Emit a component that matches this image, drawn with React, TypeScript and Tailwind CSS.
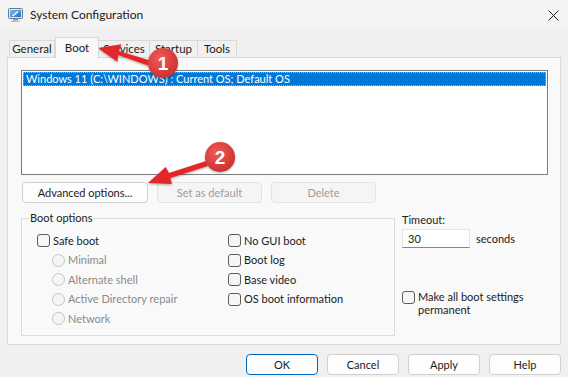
import React from 'react';

const font = "font-['Segoe_UI','Lato',sans-serif]";

function AppIcon() {
  return (
    <svg width="15" height="14" viewBox="0 0 15 14">
      <defs>
        <linearGradient id="scr" x1="0" y1="0" x2="1" y2="1">
          <stop offset="0" stopColor="#7fbef5" />
          <stop offset="1" stopColor="#1f6fc9" />
        </linearGradient>
      </defs>
      <rect x="0.5" y="0.5" width="14" height="10" rx="1" fill="#dfe5ea" stroke="#6d7b88" />
      <rect x="2" y="2" width="11" height="7" fill="url(#scr)" />
      <path d="M4 7.5 L9.5 3 L10.5 4 L5 8.5 Z" fill="#ffffff" />
      <rect x="5" y="11" width="5" height="1.5" fill="#8a96a2" />
      <rect x="3" y="12.5" width="9" height="1.5" rx="0.5" fill="#b7c0c8" />
    </svg>
  );
}

function Checkbox() {
  return <span className="w-[13px] h-[13px] rounded-[3px] border border-[#5d5d5d] bg-[#f6f6f6] shrink-0" />;
}

function Radio() {
  return <span className="w-[13px] h-[13px] rounded-full border border-[#c4c4c4] bg-[#f5f5f5] shrink-0" />;
}

function Btn({ label, w, disabled, primary }: { label: string; w: string; disabled?: boolean; primary?: boolean }) {
  const base = 'h-[21px] rounded-[4px] border flex items-center justify-center';
  const tone = disabled
    ? 'bg-[#f5f5f5] border-[#e3e3e3] text-[#9d9d9d]'
    : primary
      ? 'bg-[#fdfdfd] border-[#0067c0] text-[#1b1b1b]'
      : 'bg-[#fdfdfd] border-[#d0d0d0] text-[#1b1b1b]';
  return <div className={`${base} ${tone} ${w}`}>{label}</div>;
}

export default function App() {
  const tabs = [
    { name: 'General', w: 'w-[46px]' },
    { name: 'Boot', w: 'w-[44px]', active: true },
    { name: 'Services', w: 'w-[51px]' },
    { name: 'Startup', w: 'w-[48px]' },
    { name: 'Tools', w: 'w-[39px]' },
  ];

  return (
    <div className={`relative w-[568px] h-[377px] overflow-hidden bg-[#f0f0f0] text-[#1b1b1b] text-[11px] leading-[14px] flex flex-col ${font}`}>
      {/* title bar */}
      <div className="h-[30px] bg-[#f3f3f3] flex items-center pl-[8px] pr-[9px] shrink-0">
        <AppIcon />
        <span className="ml-[7px] text-[12px]">System Configuration</span>
        <svg className="ml-auto" width="11" height="11" viewBox="0 0 11 11">
          <path d="M0.5 0.5 L10.5 10.5 M10.5 0.5 L0.5 10.5" stroke="#1b1b1b" strokeWidth="1" />
        </svg>
      </div>

      {/* tabs */}
      <div className="flex items-end pl-[9px] pt-[7px] h-[27px] shrink-0 text-[11.5px]">
        {tabs.map((t) =>
          t.active ? (
            <div key={t.name} className={`${t.w} h-[21px] -mb-px relative z-10 bg-[#f9f9f9] border border-b-0 border-[#d9d9d9] flex items-start pt-[3px] justify-center`}>
              {t.name}
            </div>
          ) : (
            <div key={t.name} className={`${t.w} h-[17px] bg-[#f0f0f0] border border-b-0 border-l-0 first:border-l border-[#d9d9d9] flex items-center justify-center`}>
              {t.name}
            </div>
          )
        )}
      </div>

      {/* tab panel */}
      <div className="mx-[7px] w-[554px] h-[288px] border border-[#d9d9d9] bg-[#f9f9f9] pl-[13px] pt-[12px] shrink-0">
        <div className="w-[527px] h-[105px] border border-[#7c7c7c] bg-white p-px">
          <div className="h-[14px] bg-[#0078d7] outline outline-1 outline-dotted outline-[#f2a23a] -outline-offset-1 text-white pl-[3px] flex items-center">
            Windows 11 (C:\WINDOWS) : Current OS; Default OS
          </div>
        </div>

        <div className="flex gap-[9px] mt-[7px] ml-px">
          <Btn label="Advanced options..." w="w-[126px]" />
          <Btn label="Set as default" w="w-[105px]" disabled />
          <Btn label="Delete" w="w-[105px]" disabled />
        </div>

        <div className="flex mt-[8px]">
          <fieldset className="w-[374px] h-[125px] border border-[#dcdcdc] pl-[15px] pt-[6px]">
            <legend className="-ml-[8px] px-[1px] leading-[14px]">Boot options</legend>
            <div className="flex">
              <div className="w-[191px] flex flex-col">
                <div className="h-[19.5px] flex items-center gap-[3px]"><Checkbox />Safe boot</div>
                {['Minimal', 'Alternate shell', 'Active Directory repair', 'Network'].map((r) => (
                  <div key={r} className="h-[19.5px] flex items-center gap-[3px] pl-[15px] text-[#8a8a8a]"><Radio />{r}</div>
                ))}
              </div>
              <div className="flex flex-col">
                {['No GUI boot', 'Boot log', 'Base video', 'OS boot information'].map((c) => (
                  <div key={c} className="h-[19.5px] flex items-center gap-[3px]"><Checkbox />{c}</div>
                ))}
              </div>
            </div>
          </fieldset>

          <div className="ml-[7px] flex flex-col pt-[2px]">
            <span>Timeout:</span>
            <div className="flex items-center mt-[2px]">
              <div className="w-[68px] h-[19px] bg-white border border-[#e5e5e5] border-b-[#868686] flex items-center pl-[5px]">30</div>
              <span className="ml-[6px]">seconds</span>
            </div>
            <div className="flex items-start gap-[3px] mt-[43px]">
              <Checkbox />
              <span className="leading-[13px] -mt-[1px]">Make all boot settings<br />permanent</span>
            </div>
          </div>
        </div>
      </div>

      {/* dialog buttons */}
      <div className="flex justify-end gap-[9px] pr-[7px] mt-[9px]">
        <Btn label="OK" w="w-[72px]" primary />
        <Btn label="Cancel" w="w-[72px]" />
        <Btn label="Apply" w="w-[72px]" />
        <Btn label="Help" w="w-[72px]" />
      </div>

      {/* annotations */}
      <svg className="absolute inset-0 pointer-events-none" width="568" height="377" viewBox="0 0 568 377">
        <defs>
          <radialGradient id="badge" cx="0.4" cy="0.35" r="0.7">
            <stop offset="0" stopColor="#f25a56" />
            <stop offset="1" stopColor="#c9302c" />
          </radialGradient>
          <filter id="sh" x="-30%" y="-30%" width="160%" height="160%">
            <feDropShadow dx="0" dy="1" stdDeviation="1" floodColor="#000" floodOpacity="0.35" />
          </filter>
        </defs>
        <g filter="url(#sh)">
          <path d="M150 60.5 L119 51 L121.4 44.2 L98 48 L117.4 61.8 L118.2 55 L148 65.5 Z" fill="#e3262b" />
          <circle cx="163" cy="63" r="15" fill="url(#badge)" />
          <path d="M206 161 L169 173 L165.7 167 L148 183 L171.8 184 L170.4 178 L208 166 Z" fill="#e3262b" />
          <circle cx="220" cy="157" r="15" fill="url(#badge)" />
        </g>
        <text x="163" y="70" textAnchor="middle" fontFamily="Liberation Sans, Arial, sans-serif" fontWeight="bold" fontSize="19" fill="#ffffff">1</text>
        <text x="220" y="164" textAnchor="middle" fontFamily="Liberation Sans, Arial, sans-serif" fontWeight="bold" fontSize="19" fill="#ffffff">2</text>
      </svg>
    </div>
  );
}
